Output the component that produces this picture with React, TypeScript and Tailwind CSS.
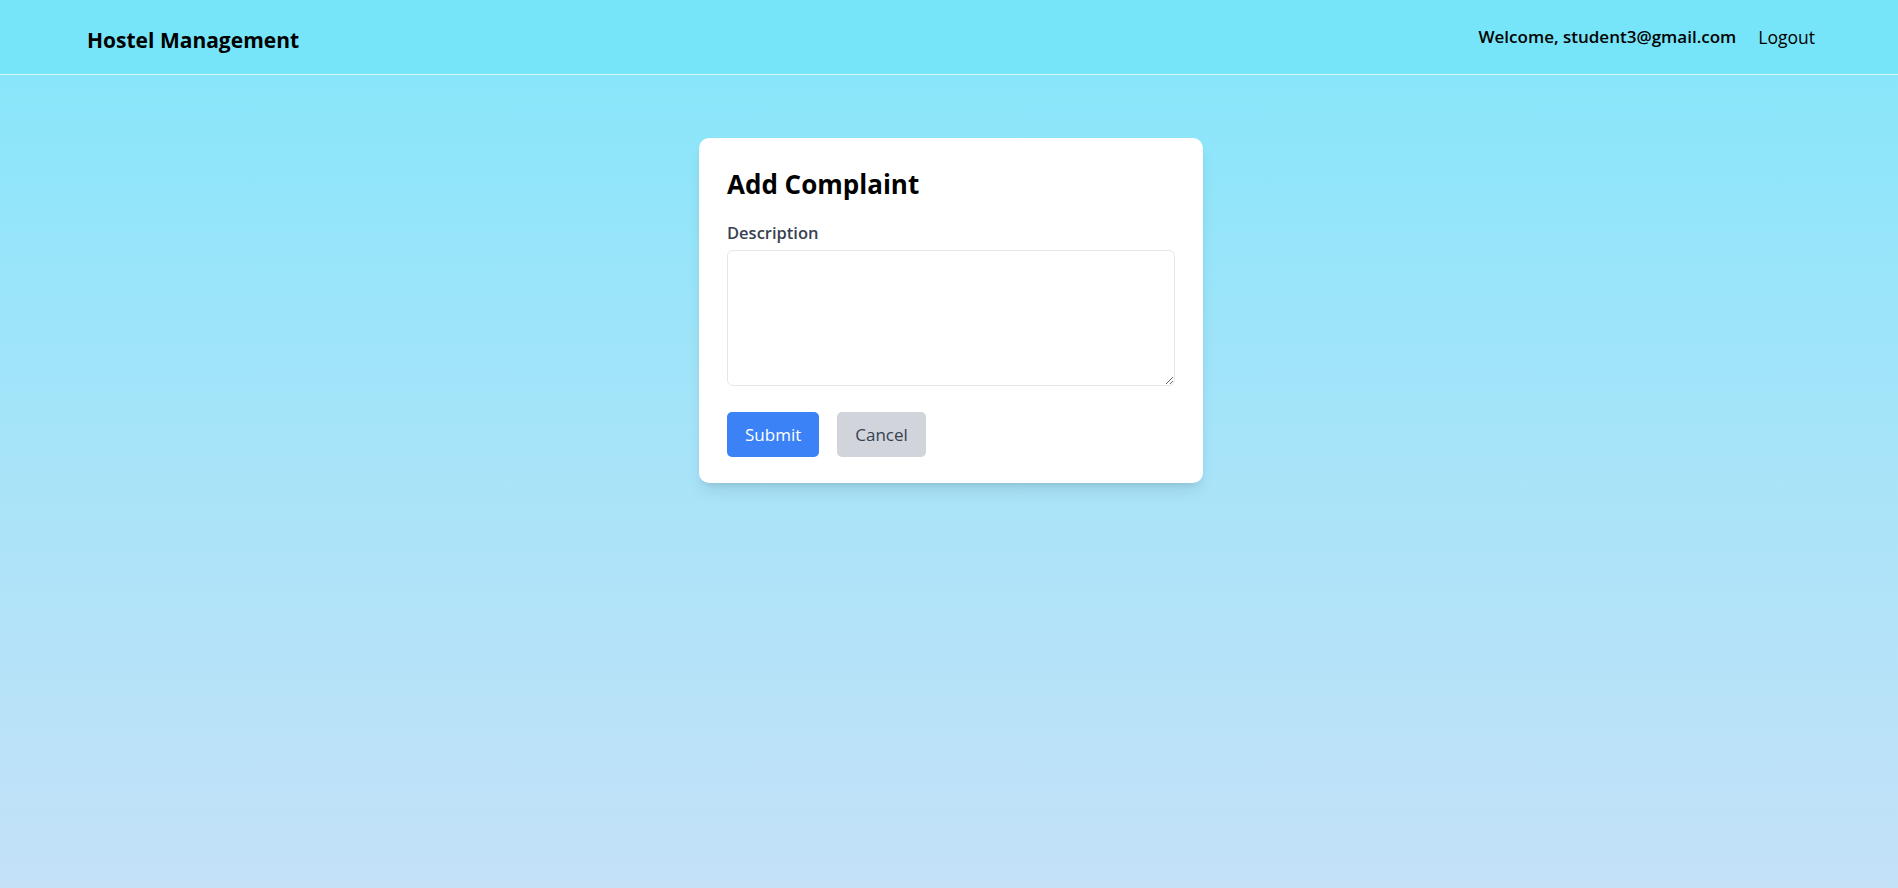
import { useState } from 'react';

const font = { fontFamily: '"Open Sans", "Noto Sans", sans-serif' };

const Header = () => (
  <header className="h-[75px] flex items-center justify-between pl-[87px] pr-[83px] bg-[#77e5f9] border-b border-white/70">
    <h1 className="pt-[6px] text-[21px] leading-[28px] font-bold text-black">Hostel Management</h1>
    <div className="flex items-center gap-[22px] text-[17px] leading-[24px] text-black">
      <span className="font-semibold">Welcome, student3@gmail.com</span>
      <button className="font-normal text-[17.5px]">Logout</button>
    </div>
  </header>
);

const App = () => {
  const [description, setDescription] = useState('');

  return (
    <div style={font} className="min-h-screen bg-gradient-to-b from-[#82e6fa] to-[#c4e1f8]">
      <Header />

      <main className="flex justify-center pt-[63px] pl-[4px]">
        <div className="w-[504px] bg-white rounded-[10px] shadow-lg px-7 pt-7 pb-[26px]">
          <h2 className="text-[26px] leading-[36px] font-bold text-black">Add Complaint</h2>

          <form className="mt-[19px]" onSubmit={(e) => e.preventDefault()}>
            <label className="block text-[16.5px] leading-[24px] font-semibold text-[#374151] mb-[5px]">
              Description
            </label>
            <textarea
              value={description}
              onChange={(e) => setDescription(e.target.value)}
              className="block w-full h-[136px] border border-[#e5e7eb] rounded-[6px] p-2 outline-none"
            />

            <div className="flex gap-[18px] mt-[26px]">
              <button type="submit" className="h-[45px] px-[18px] rounded-[5px] bg-[#3b82f6] text-white text-[17px]">
                Submit
              </button>
              <button type="button" className="h-[45px] px-[18px] rounded-[5px] bg-[#d1d5db] text-[#374151] text-[17px]">
                Cancel
              </button>
            </div>
          </form>
        </div>
      </main>
    </div>
  );
};

export default App;
